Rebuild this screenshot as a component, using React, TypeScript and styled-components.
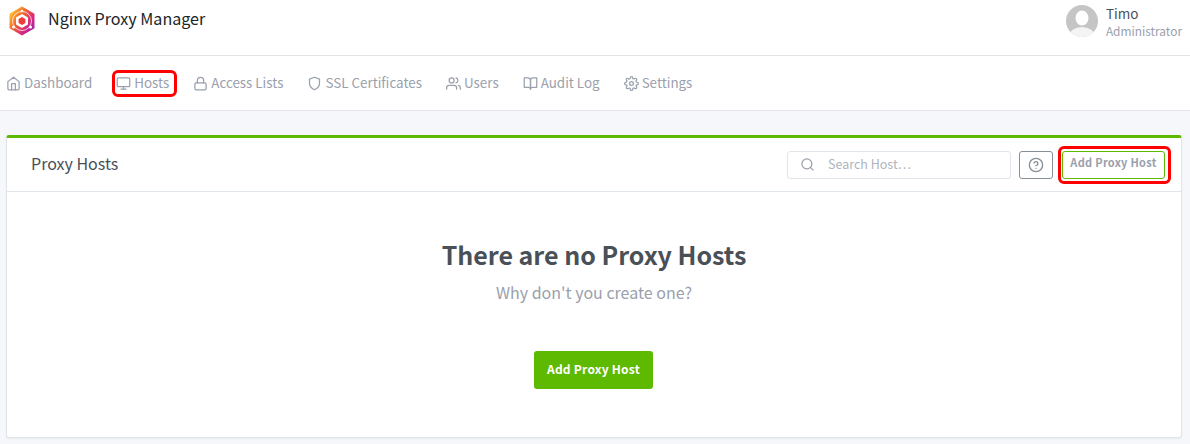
import styled, { createGlobalStyle } from "styled-components";
import {
  FiBookOpen,
  FiHelpCircle,
  FiHome,
  FiLock,
  FiMonitor,
  FiSearch,
  FiSettings,
  FiShield,
  FiUsers,
} from "react-icons/fi";

const FONT = `"Noto Sans CJK SC", "Noto Sans", sans-serif`;

const navItems = [
  { label: "Dashboard", icon: FiHome },
  { label: "Hosts", icon: FiMonitor, marked: true },
  { label: "Access Lists", icon: FiLock },
  { label: "SSL Certificates", icon: FiShield },
  { label: "Users", icon: FiUsers },
  { label: "Audit Log", icon: FiBookOpen },
  { label: "Settings", icon: FiSettings },
];

function Logo() {
  return (
    <svg width="28" height="30" viewBox="0 0 28 30">
      <defs>
        <linearGradient id="logoFill" x1="0" y1="0.1" x2="1" y2="0.9">
          <stop offset="0" stopColor="#ffdc2e" />
          <stop offset="0.4" stopColor="#f4622c" />
          <stop offset="0.7" stopColor="#d9297f" />
          <stop offset="1" stopColor="#8f23b8" />
        </linearGradient>
      </defs>
      <polygon points="14,0.5 26.5,7.7 26.5,22.3 14,29.5 1.5,22.3 1.5,7.7" fill="url(#logoFill)" />
      <circle cx="14" cy="15" r="9.5" fill="none" stroke="#fff" strokeWidth="1" opacity="0.75" />
      <polygon points="14,8 20,11.5 20,18.5 14,22 8,18.5 8,11.5" fill="#fff" />
      <polygon points="14,11 17.4,13 17.4,17 14,19 10.6,17 10.6,13" fill="#ef3b3b" />
      <circle cx="5.5" cy="21" r="1.5" fill="#fff" />
      <circle cx="22.5" cy="21" r="1.5" fill="#fff" />
      <circle cx="14" cy="5" r="1.3" fill="#fff" />
    </svg>
  );
}

function Avatar() {
  return (
    <svg width="32" height="32" viewBox="0 0 32 32">
      <clipPath id="avatarClip">
        <circle cx="16" cy="16" r="16" />
      </clipPath>
      <g clipPath="url(#avatarClip)">
        <rect width="32" height="32" fill="#c5c5c5" />
        <ellipse cx="16" cy="13" rx="6.5" ry="7.5" fill="#fff" />
        <ellipse cx="16" cy="31" rx="13" ry="9" fill="#f4f4f4" />
      </g>
    </svg>
  );
}

export default function App() {
  return (
    <>
      <GlobalStyle />
      <TopBar>
        <Brand>
          <Logo />
          <BrandName>Nginx Proxy Manager</BrandName>
        </Brand>
        <Profile>
          <Avatar />
          <ProfileText>
            <ProfileName>Timo</ProfileName>
            <ProfileRole>Administrator</ProfileRole>
          </ProfileText>
        </Profile>
      </TopBar>
      <Nav>
        {navItems.map(({ label, icon: Icon, marked }) => (
          <NavItem key={label} $marked={marked}>
            <Icon size={15} />
            <NavLabel>{label}</NavLabel>
          </NavItem>
        ))}
      </Nav>
      <Main>
        <Card>
          <CardHeader>
            <CardTitle>Proxy Hosts</CardTitle>
            <Actions>
              <SearchBox>
                <FiSearch size={15} />
                <SearchInput placeholder="Search Host…" readOnly />
              </SearchBox>
              <HelpButton>
                <FiHelpCircle size={16} />
              </HelpButton>
              <Marked>
                <OutlineButton>Add Proxy Host</OutlineButton>
              </Marked>
            </Actions>
          </CardHeader>
          <Empty>
            <EmptyTitle>There are no Proxy Hosts</EmptyTitle>
            <EmptyText>Why don't you create one?</EmptyText>
            <PrimaryButton>Add Proxy Host</PrimaryButton>
          </Empty>
        </Card>
      </Main>
    </>
  );
}

const GlobalStyle = createGlobalStyle`
  html, body {
    margin: 0;
    height: 444px;
    overflow: hidden;
    background: #f5f7fb;
    font-family: ${FONT};
    color: #495057;
  }
  * {
    box-sizing: border-box;
  }
`;

const TopBar = styled.header`
  display: flex;
  justify-content: space-between;
  height: 56px;
  padding: 4px 8px 0 8px;
  background: #fff;
  border-bottom: 1px solid #e3e3e3;
`;

const Brand = styled.div`
  display: flex;
  align-items: flex-start;
  gap: 12px;
  svg {
    margin-top: 2px;
  }
`;

const BrandName = styled.div`
  font-size: 16.1px;
  line-height: 24px;
  margin-top: 2px;
  color: #212529;
`;

const Profile = styled.div`
  display: flex;
  gap: 8px;
  align-items: flex-start;
  svg {
    margin-top: 1px;
  }
`;

const ProfileText = styled.div`
  display: flex;
  flex-direction: column;
`;

const ProfileName = styled.div`
  font-size: 13.5px;
  line-height: 18px;
  color: #495057;
`;

const ProfileRole = styled.div`
  font-size: 11.9px;
  line-height: 18px;
  color: #9aa0ac;
`;

const Nav = styled.nav`
  display: flex;
  align-items: center;
  gap: 24px;
  height: 55px;
  padding-left: 6px;
  background: #fff;
  border-bottom: 1px solid #e3e6eb;
`;

const Marked = styled.div`
  position: relative;
  &::after {
    content: "";
    position: absolute;
    inset: -5px -6px -5px -4px;
    border: 3px solid #f00;
    border-radius: 6px;
    pointer-events: none;
  }
`;

const NavItem = styled.a<{ $marked?: boolean }>`
  position: relative;
  display: flex;
  align-items: center;
  gap: 3px;
  font-size: 13.4px;
  line-height: 20px;
  color: #9aa0ac;
  svg {
    stroke-width: 2;
  }
  ${(p) =>
    p.$marked &&
    `
    &::after {
      content: "";
      position: absolute;
      inset: -2px -8px -3px -4px;
      border: 3px solid #f00;
      border-radius: 6px;
    }
  `}
`;

const NavLabel = styled.span`
  margin-bottom: 2px;
`;

const Main = styled.main`
  padding: 24px 8px 0 6px;
`;

const Card = styled.section`
  height: 303px;
  background: #fff;
  border: 1px solid rgba(0, 40, 100, 0.12);
  border-top: 3px solid #5eba00;
  border-radius: 3px;
  box-shadow: 0 1px 2px rgba(0, 0, 0, 0.05);
`;

const CardHeader = styled.div`
  display: flex;
  align-items: center;
  justify-content: space-between;
  height: 54px;
  padding: 0 16px 0 24px;
  border-bottom: 1px solid rgba(0, 40, 100, 0.12);
`;

const CardTitle = styled.h3`
  margin: 0 0 3px;
  font-size: 16px;
  font-weight: 400;
  line-height: 24px;
  color: #495057;
`;

const Actions = styled.div`
  display: flex;
  align-items: center;
  gap: 8px;
`;

const SearchBox = styled.label`
  display: flex;
  align-items: center;
  gap: 13px;
  width: 224px;
  height: 28px;
  padding-left: 12px;
  border: 1px solid rgba(0, 40, 100, 0.12);
  border-radius: 3px;
  color: #9aa0ac;
`;

const SearchInput = styled.input`
  flex: 1;
  min-width: 0;
  border: 0;
  outline: 0;
  padding: 0 0 2px;
  background: transparent;
  font-family: ${FONT};
  font-size: 12.5px;
  color: #495057;
  &::placeholder {
    color: #aeb4be;
    opacity: 1;
  }
`;

const HelpButton = styled.button`
  display: flex;
  align-items: center;
  justify-content: center;
  width: 34px;
  height: 28px;
  padding: 0;
  margin-right: 1px;
  background: #fff;
  border: 1px solid #868e96;
  border-radius: 3px;
  color: #868e96;
`;

const OutlineButton = styled.button`
  display: block;
  width: 103px;
  height: 28px;
  padding: 0 0 5px;
  background: #fff;
  border: 1px solid #5eba00;
  border-radius: 3px;
  font-family: ${FONT};
  font-size: 11px;
  font-weight: 700;
  letter-spacing: 0.3px;
  color: #9aa0ac;
`;

const Empty = styled.div`
  display: flex;
  flex-direction: column;
  align-items: center;
  padding-top: 44px;
`;

const EmptyTitle = styled.h1`
  margin: 0;
  font-size: 25px;
  font-weight: 700;
  line-height: 36px;
  color: #495057;
`;

const EmptyText = styled.p`
  margin: 8px 0 0;
  font-size: 16px;
  line-height: 24px;
  color: #9aa0ac;
`;

const PrimaryButton = styled.button`
  margin: 47px 1px 0 0;
  width: 119px;
  height: 38px;
  padding: 0 0 3px;
  background: #5eba00;
  border: 0;
  border-radius: 3px;
  font-family: ${FONT};
  font-size: 12px;
  font-weight: 700;
  letter-spacing: 0.25px;
  color: #fff;
`;
